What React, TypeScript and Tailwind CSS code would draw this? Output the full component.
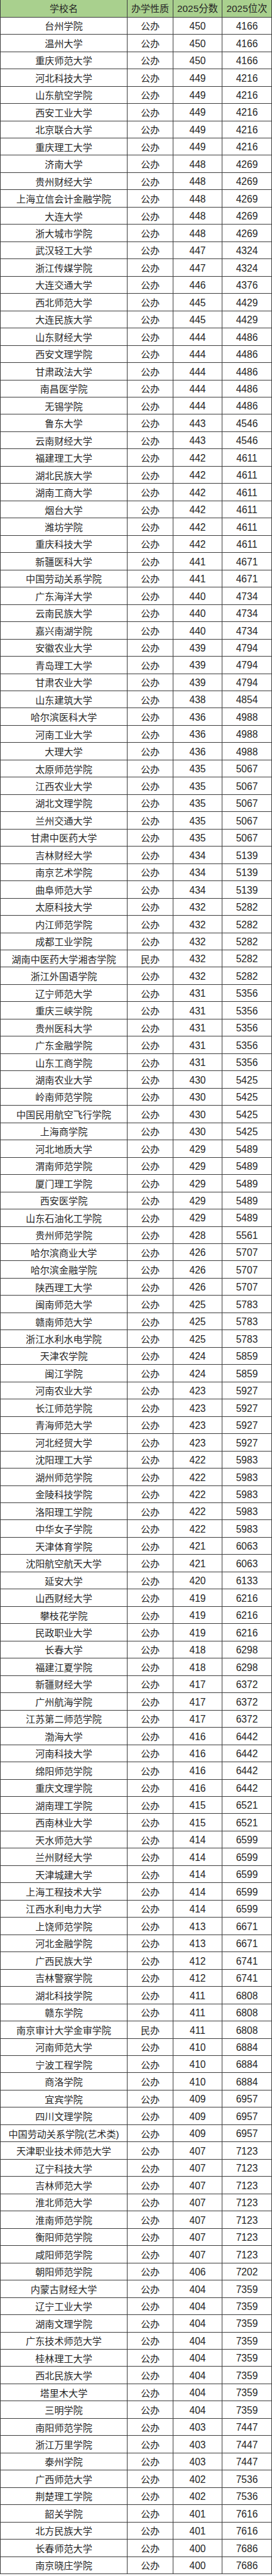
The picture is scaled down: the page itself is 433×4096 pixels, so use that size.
import React from "react";

const raw = `台州学院,公办,450,4166
温州大学,公办,450,4166
重庆师范大学,公办,450,4166
河北科技大学,公办,449,4216
山东航空学院,公办,449,4216
西安工业大学,公办,449,4216
北京联合大学,公办,449,4216
重庆理工大学,公办,449,4216
济南大学,公办,448,4269
贵州财经大学,公办,448,4269
上海立信会计金融学院,公办,448,4269
大连大学,公办,448,4269
浙大城市学院,公办,448,4269
武汉轻工大学,公办,447,4324
浙江传媒学院,公办,447,4324
大连交通大学,公办,446,4376
西北师范大学,公办,445,4429
大连民族大学,公办,445,4429
山东财经大学,公办,444,4486
西安文理学院,公办,444,4486
甘肃政法大学,公办,444,4486
南昌医学院,公办,444,4486
无锡学院,公办,444,4486
鲁东大学,公办,443,4546
云南财经大学,公办,443,4546
福建理工大学,公办,442,4611
湖北民族大学,公办,442,4611
湖南工商大学,公办,442,4611
烟台大学,公办,442,4611
潍坊学院,公办,442,4611
重庆科技大学,公办,442,4611
新疆医科大学,公办,441,4671
中国劳动关系学院,公办,441,4671
广东海洋大学,公办,440,4734
云南民族大学,公办,440,4734
嘉兴南湖学院,公办,440,4734
安徽农业大学,公办,439,4794
青岛理工大学,公办,439,4794
甘肃农业大学,公办,439,4794
山东建筑大学,公办,438,4854
哈尔滨医科大学,公办,436,4988
河南工业大学,公办,436,4988
大理大学,公办,436,4988
太原师范学院,公办,435,5067
江西农业大学,公办,435,5067
湖北文理学院,公办,435,5067
兰州交通大学,公办,435,5067
甘肃中医药大学,公办,435,5067
吉林财经大学,公办,434,5139
南京艺术学院,公办,434,5139
曲阜师范大学,公办,434,5139
太原科技大学,公办,432,5282
内江师范学院,公办,432,5282
成都工业学院,公办,432,5282
湖南中医药大学湘杏学院,民办,432,5282
浙江外国语学院,公办,432,5282
辽宁师范大学,公办,431,5356
重庆三峡学院,公办,431,5356
贵州医科大学,公办,431,5356
广东金融学院,公办,431,5356
山东工商学院,公办,431,5356
湖南农业大学,公办,430,5425
岭南师范学院,公办,430,5425
中国民用航空飞行学院,公办,430,5425
上海商学院,公办,430,5425
河北地质大学,公办,429,5489
渭南师范学院,公办,429,5489
厦门理工学院,公办,429,5489
西安医学院,公办,429,5489
山东石油化工学院,公办,429,5489
贵州师范学院,公办,428,5561
哈尔滨商业大学,公办,426,5707
哈尔滨金融学院,公办,426,5707
陕西理工大学,公办,426,5707
闽南师范大学,公办,425,5783
赣南师范大学,公办,425,5783
浙江水利水电学院,公办,425,5783
天津农学院,公办,424,5859
闽江学院,公办,424,5859
河南农业大学,公办,423,5927
长江师范学院,公办,423,5927
青海师范大学,公办,423,5927
河北经贸大学,公办,423,5927
沈阳理工大学,公办,422,5983
湖州师范学院,公办,422,5983
金陵科技学院,公办,422,5983
洛阳理工学院,公办,422,5983
中华女子学院,公办,422,5983
天津体育学院,公办,421,6063
沈阳航空航天大学,公办,421,6063
延安大学,公办,420,6133
山西财经大学,公办,419,6216
攀枝花学院,公办,419,6216
民政职业大学,公办,419,6216
长春大学,公办,418,6298
福建江夏学院,公办,418,6298
新疆财经大学,公办,417,6372
广州航海学院,公办,417,6372
江苏第二师范学院,公办,417,6372
渤海大学,公办,416,6442
河南科技大学,公办,416,6442
绵阳师范学院,公办,416,6442
重庆文理学院,公办,416,6442
湖南理工学院,公办,415,6521
西南林业大学,公办,415,6521
天水师范大学,公办,414,6599
兰州财经大学,公办,414,6599
天津城建大学,公办,414,6599
上海工程技术大学,公办,414,6599
江西水利电力大学,公办,414,6599
上饶师范学院,公办,413,6671
河北金融学院,公办,413,6671
广西民族大学,公办,412,6741
吉林警察学院,公办,412,6741
湖北科技学院,公办,411,6808
赣东学院,公办,411,6808
南京审计大学金审学院,民办,411,6808
河南师范大学,公办,410,6884
宁波工程学院,公办,410,6884
商洛学院,公办,410,6884
宜宾学院,公办,409,6957
四川文理学院,公办,409,6957
中国劳动关系学院(艺术类),公办,409,6957
天津职业技术师范大学,公办,407,7123
辽宁科技大学,公办,407,7123
吉林师范大学,公办,407,7123
淮北师范大学,公办,407,7123
淮南师范学院,公办,407,7123
衡阳师范学院,公办,407,7123
咸阳师范学院,公办,407,7123
朝阳师范学院,公办,406,7202
内蒙古财经大学,公办,404,7359
辽宁工业大学,公办,404,7359
湖南文理学院,公办,404,7359
广东技术师范大学,公办,404,7359
桂林理工大学,公办,404,7359
西北民族大学,公办,404,7359
塔里木大学,公办,404,7359
三明学院,公办,404,7359
南阳师范学院,公办,403,7447
浙江万里学院,公办,403,7447
泰州学院,公办,403,7447
广西师范大学,公办,402,7536
荆楚理工学院,公办,402,7536
韶关学院,公办,401,7616
北方民族大学,公办,401,7616
长春师范大学,公办,400,7686
南京晓庄学院,公办,400,7686`;

const rows = raw.split("\n").map((l) => l.split(","));

export default function App() {
  return (
    <div
      className="w-[433px] bg-white text-[#262626]"
      style={{ fontFamily: '"Liberation Sans", "Noto Sans CJK SC", sans-serif' }}
    >
      <div className="w-[433px] border-x border-[#3c3c3c]">
        <div className="grid h-[27.7px] grid-cols-[202px_73px_78px_1fr] border-b border-[#3c3c3c] bg-[#a9d08e] text-[15px] leading-none">
          <div className="flex items-center justify-center border-r border-[#3c3c3c] pt-[1px]">学校名</div>
          <div className="flex items-center justify-center border-r border-[#3c3c3c] pt-[1px]">办学性质</div>
          <div className="flex items-center justify-center border-r border-[#3c3c3c] pt-[1px] text-[15.4px]">2025分数</div>
          <div className="flex items-center justify-center pt-[1px] text-[15.4px]">2025位次</div>
        </div>
        {rows.map((r, i) => (
          <div
            key={i}
            className="grid h-[27.47px] grid-cols-[202px_73px_78px_1fr] border-b border-[#3c3c3c] leading-none"
          >
            <div className="flex items-center justify-center whitespace-nowrap border-r border-[#3c3c3c] pt-[2px] text-[15.1px]">
              {r[0]}
            </div>
            <div className="flex items-center justify-center border-r border-[#3c3c3c] pt-[2px] text-[15.1px]">
              {r[1]}
            </div>
            <div className="flex items-center justify-center border-r border-[#3c3c3c] pt-[2px] text-[15.6px]">
              {r[2]}
            </div>
            <div className="flex items-center justify-center pt-[2px] text-[15.6px]">{r[3]}</div>
          </div>
        ))}
      </div>
    </div>
  );
}
